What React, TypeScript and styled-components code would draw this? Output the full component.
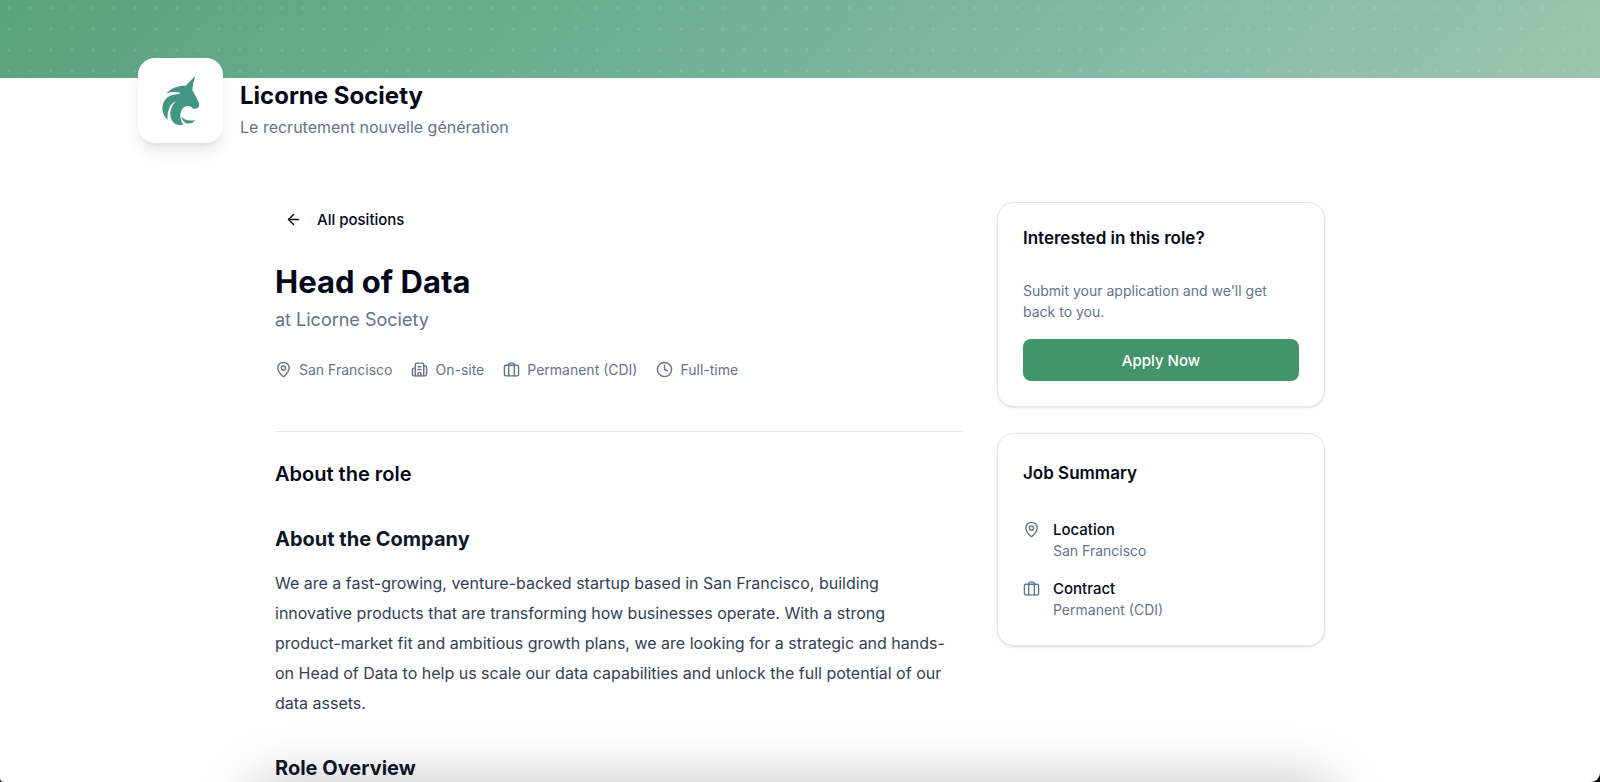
import React from 'react';
import styled, { createGlobalStyle } from 'styled-components';
import { ArrowLeft, Clock, MapPin } from 'lucide-react';

const color = {
  ink: '#020817',
  muted: '#64748b',
  body: '#334155',
  heading: '#0f172a',
  line: '#e5e7eb',
  green: '#43946b',
  logo: '#439584',
};

const GlobalStyle = createGlobalStyle`
  *, *::before, *::after { box-sizing: border-box; }
  body {
    margin: 0;
    background: #000;
    color: ${color.ink};
    font-family: Inter, "Liberation Sans", sans-serif;
    font-size: 15px;
    line-height: 21px;
    -webkit-font-smoothing: antialiased;
  }
  h1, h2, h3, p, dl, dt, dd, ul { margin: 0; padding: 0; }
`;

const Page = styled.div`
  height: 100vh;
  overflow: hidden;
  background: #fff;
  border-radius: 0 0 9px 4px;
`;

const Banner = styled.div`
  height: 78px;
  background:
    radial-gradient(circle at 9px 8px, rgba(255, 255, 255, 0.1) 1px, transparent 2px) 0 0 / 21px 21px,
    linear-gradient(135deg, #5ba27e 0%, #72b196 45%, #8dbfa9 80%, #9bc4ae 100%);
`;

const CompanyHeader = styled.header`
  display: flex;
  gap: 17px;
  max-width: 1324px;
  margin: -20px auto 0;
`;

const LogoTile = styled.div`
  display: flex;
  flex: none;
  width: 85px;
  height: 85px;
  align-items: center;
  justify-content: center;
  border-radius: 17px;
  background: #fff;
  box-shadow: 0 10px 16px -3px rgba(0, 0, 0, 0.1), 0 4px 6px -4px rgba(0, 0, 0, 0.1);
`;

const CompanyText = styled.div`
  padding-top: 21px;
`;

const CompanyName = styled.h1`
  font-size: 24px;
  line-height: 34px;
  font-weight: 700;
`;

const Tagline = styled.p`
  color: ${color.muted};
  font-size: 16px;
  line-height: 28px;
`;

const Columns = styled.div`
  display: grid;
  grid-template-columns: minmax(0, 1fr) 328px;
  gap: 34px;
  align-items: start;
  max-width: 1050px;
  margin: 59px auto 0;
`;

const BackLink = styled.a`
  display: inline-flex;
  align-items: center;
  gap: 15px;
  height: 34px;
  padding: 0 10px;
  color: ${color.ink};
  font-weight: 500;
  text-decoration: none;
`;

const JobTitle = styled.h1`
  margin-top: 27px;
  font-size: 31px;
  line-height: 38px;
  font-weight: 700;
`;

const JobCompany = styled.p`
  margin-top: 4px;
  color: ${color.muted};
  font-size: 18px;
  line-height: 30px;
`;

const Facts = styled.ul`
  display: flex;
  flex-wrap: wrap;
  gap: 19px;
  margin-top: 24px;
  list-style: none;
  color: ${color.muted};
  font-size: 14px;
`;

const Fact = styled.li`
  display: flex;
  align-items: center;
  gap: 7px;
`;

const Divider = styled.hr`
  height: 1px;
  margin: 51px 0 0;
  border: 0;
  background: ${color.line};
`;

const SectionTitle = styled.h2`
  margin-top: 27px;
  font-size: 20px;
  line-height: 30px;
  font-weight: 600;
`;

const ContentTitle = styled.h3`
  margin-top: 35px;
  color: ${color.heading};
  font-size: 20px;
  line-height: 30px;
  font-weight: 700;
`;

const Paragraph = styled.p`
  margin-top: 14px;
  padding-right: 4px;
  color: ${color.body};
  font-size: 16px;
  line-height: 30px;
`;

const Sidebar = styled.aside`
  display: grid;
  gap: 26px;
`;

const Card = styled.section`
  padding: 25px;
  border: 1px solid ${color.line};
  border-radius: 17px;
  background: #fff;
  box-shadow: 0 1px 3px rgba(0, 0, 0, 0.1), 0 1px 2px -1px rgba(0, 0, 0, 0.1);
`;

const CardTitle = styled.h2<{ $roomy?: boolean }>`
  padding: ${(p) => (p.$roomy ? '4px 0' : '0')};
  font-size: 17px;
  line-height: 20px;
  font-weight: 600;
`;

const CardText = styled.p`
  margin-top: 32px;
  color: ${color.muted};
  font-size: 14px;
`;

const ApplyButton = styled.button`
  display: block;
  width: 100%;
  height: 42px;
  margin-top: 17px;
  border: 0;
  border-radius: 8px;
  background: ${color.green};
  color: #fff;
  font: inherit;
  font-weight: 500;
`;

const Summary = styled.dl`
  display: grid;
  gap: 17px;
  margin-top: 32px;
`;

const SummaryItem = styled.div`
  display: grid;
  grid-template-columns: 17px 1fr;
  column-gap: 13px;
  color: ${color.muted};

  svg { margin-top: 2px; }
  dt { color: ${color.ink}; font-weight: 500; }
  dd { grid-column: 2; font-size: 14px; }
`;

const BottomShade = styled.div`
  position: fixed;
  left: 16%;
  right: 17%;
  top: 100%;
  height: 100px;
  box-shadow: 0 0 56px rgba(0, 0, 0, 0.24);
  pointer-events: none;
`;

function UnicornLogo() {
  return (
    <svg width="65" height="70" viewBox="-6 2 195 210" fill={color.logo} role="img" aria-label="Licorne Society">
      <path d="M136 31 Q129 51 127 73 L147 113 Q149 125 142 129 L130 131 Q122 119 108 123 C89 129 85 158 100 178 Q86 181 75 176 C55 162 57 127 78 108 C58 116 51 139 53 163 C34 148 31 117 50 98 C64 85 80 90 92 83 C78 78 63 80 49 84 C65 66 87 60 107 61 Z" />
      <path d="M93 152 Q106 170 137 164 Q124 179 106 173 Q97 166 93 152 Z" />
    </svg>
  );
}

function OfficeIcon({ size }: { size: number }) {
  return (
    <svg width={size} height={size} viewBox="0 0 24 24" fill="none" stroke="currentColor" strokeWidth="2" strokeLinecap="round" strokeLinejoin="round" aria-hidden="true">
      <path d="M10 12h4M10 8h4M14 21v-3a2 2 0 0 0-4 0v3" />
      <path d="M6 10H4a2 2 0 0 0-2 2v7a2 2 0 0 0 2 2h16a2 2 0 0 0 2-2V9a2 2 0 0 0-2-2h-2" />
      <path d="M6 21V5a2 2 0 0 1 2-2h8a2 2 0 0 1 2 2v16" />
    </svg>
  );
}

function LuggageIcon({ size }: { size: number }) {
  return (
    <svg width={size} height={size} viewBox="0 0 24 24" fill="none" stroke="currentColor" strokeWidth="2" strokeLinecap="round" strokeLinejoin="round" aria-hidden="true">
      <rect x="2" y="6" width="20" height="15" rx="2" />
      <path d="M16 21V5a2 2 0 0 0-2-2h-4a2 2 0 0 0-2 2v16" />
    </svg>
  );
}

export default function App() {
  return (
    <>
      <GlobalStyle />
      <Page>
        <Banner />
        <CompanyHeader>
          <LogoTile><UnicornLogo /></LogoTile>
          <CompanyText>
            <CompanyName>Licorne Society</CompanyName>
            <Tagline>Le recrutement nouvelle génération</Tagline>
          </CompanyText>
        </CompanyHeader>
        <Columns>
          <main>
            <BackLink href="#positions"><ArrowLeft size={17} />All positions</BackLink>
            <JobTitle>Head of Data</JobTitle>
            <JobCompany>at Licorne Society</JobCompany>
            <Facts>
              <Fact><MapPin size={17} />San Francisco</Fact>
              <Fact><OfficeIcon size={17} />On-site</Fact>
              <Fact><LuggageIcon size={17} />Permanent (CDI)</Fact>
              <Fact><Clock size={17} />Full-time</Fact>
            </Facts>
            <Divider />
            <SectionTitle>About the role</SectionTitle>
            <ContentTitle>About the Company</ContentTitle>
            <Paragraph>
              We are a fast-growing, venture-backed startup based in San Francisco, building
              innovative products that are transforming how businesses operate. With a strong
              <br />
              product-market fit and ambitious growth plans, we are looking for a strategic and
              hands-on Head of Data to help us scale our data capabilities and unlock the full
              potential of our data assets.
            </Paragraph>
            <ContentTitle>Role Overview</ContentTitle>
          </main>
          <Sidebar>
            <Card>
              <CardTitle>Interested in this role?</CardTitle>
              <CardText>Submit your application and we'll get back to you.</CardText>
              <ApplyButton type="button">Apply Now</ApplyButton>
            </Card>
            <Card>
              <CardTitle $roomy>Job Summary</CardTitle>
              <Summary>
                <SummaryItem>
                  <MapPin size={17} />
                  <dt>Location</dt>
                  <dd>San Francisco</dd>
                </SummaryItem>
                <SummaryItem>
                  <LuggageIcon size={17} />
                  <dt>Contract</dt>
                  <dd>Permanent (CDI)</dd>
                </SummaryItem>
              </Summary>
            </Card>
          </Sidebar>
        </Columns>
        <BottomShade />
      </Page>
    </>
  );
}
